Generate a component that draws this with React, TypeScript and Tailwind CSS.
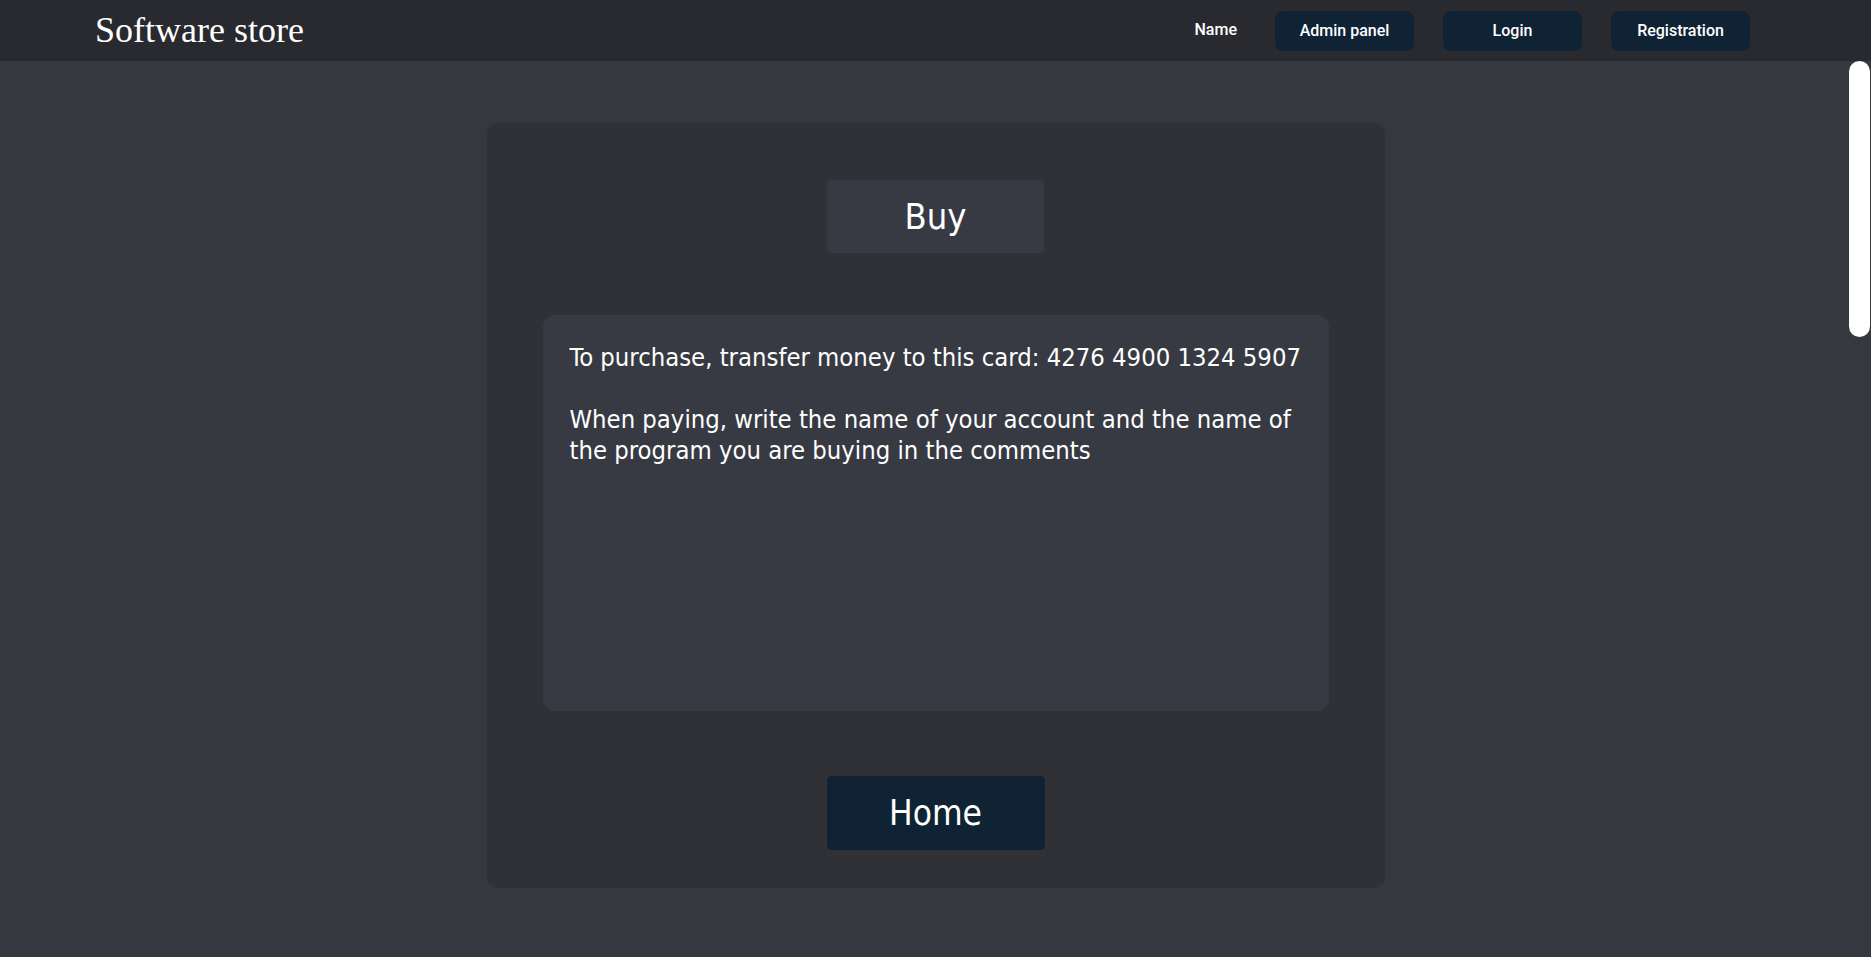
import React from "react";

const navButtons = ["Admin panel", "Login", "Registration"];

const App = () => {
    return (
        <div className="h-screen flex flex-col bg-[#363840] text-white overflow-hidden">
            <header className="h-[61px] shrink-0 bg-[#292a2f] flex items-center justify-between pl-[95px] pr-[121px]">
                <h1 className="text-[36px] leading-none font-['Liberation_Serif',serif] -mt-[2px]">
                    Software store
                </h1>
                <nav className="flex items-center font-['Roboto',sans-serif] font-medium text-[16px]">
                    <span className="mr-[38px] -mt-[2px]">Name</span>
                    <div className="flex gap-[29px]">
                        {navButtons.map((label) => (
                            <button
                                key={label}
                                className="w-[139px] h-[40px] rounded-[8px] bg-[#0f2334] text-white flex items-center justify-center"
                            >
                                {label}
                            </button>
                        ))}
                    </div>
                </nav>
            </header>

            <main className="relative flex-1 overflow-hidden">
                {/* scroll thumb */}
                <div className="absolute right-[1px] top-0 w-[21px] h-[276px] bg-white rounded-full" />

                <div className="flex justify-center items-start pt-[62px]">
                    <section className="w-[898px] h-[765px] bg-[#303136] rounded-[12px] flex flex-col items-center pt-[57px] font-['DejaVu_Sans_Condensed','DejaVu_Sans',sans-serif]">
                        <div className="w-[217px] h-[73px] bg-[#373a42] rounded-[4px] flex items-center justify-center text-[36px]">
                            Buy
                        </div>

                        <div className="mt-[62px] w-[786px] h-[396px] bg-[#373a42] rounded-[12px] px-[27px] pt-[27px] text-[25.4px] leading-[31px]">
                            <p>To purchase, transfer money to this card: 4276 4900 1324 5907</p>
                            <p className="mt-[31px]">
                                When paying, write the name of your account and the name of the program you are buying in the comments
                            </p>
                        </div>

                        <button className="mt-[65px] w-[218px] h-[74px] bg-[#0f2334] rounded-[5px] text-[35px] text-white flex items-center justify-center">
                            Home
                        </button>
                    </section>
                </div>
            </main>
        </div>
    );
};

export default App;
